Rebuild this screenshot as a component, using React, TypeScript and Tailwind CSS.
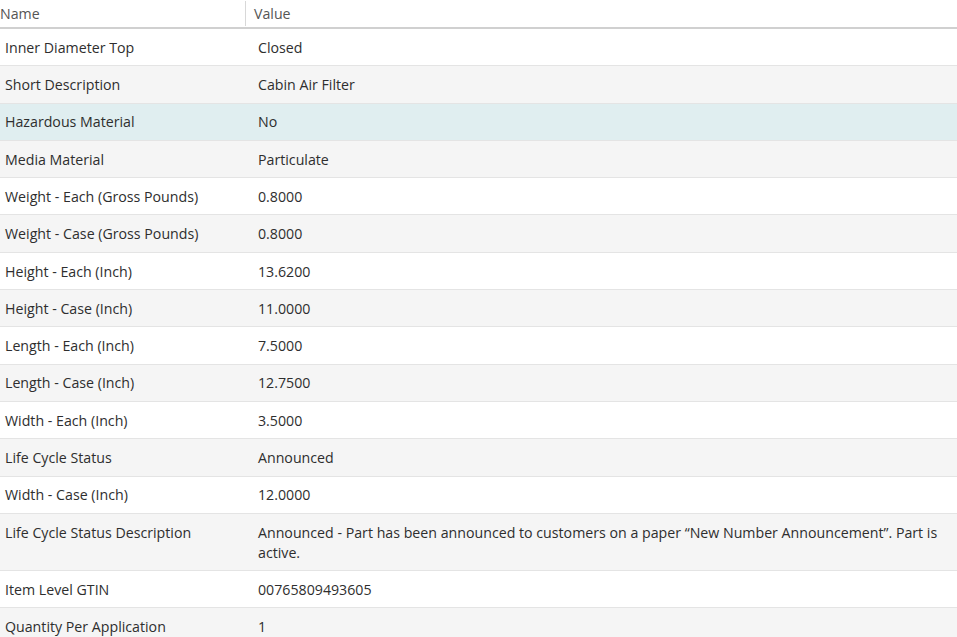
const rows: [string, string][] = [
  ["Inner Diameter Top", "Closed"],
  ["Short Description", "Cabin Air Filter"],
  ["Hazardous Material", "No"],
  ["Media Material", "Particulate"],
  ["Weight - Each (Gross Pounds)", "0.8000"],
  ["Weight - Case (Gross Pounds)", "0.8000"],
  ["Height - Each (Inch)", "13.6200"],
  ["Height - Case (Inch)", "11.0000"],
  ["Length - Each (Inch)", "7.5000"],
  ["Length - Case (Inch)", "12.7500"],
  ["Width - Each (Inch)", "3.5000"],
  ["Life Cycle Status", "Announced"],
  ["Width - Case (Inch)", "12.0000"],
  [
    "Life Cycle Status Description",
    "Announced - Part has been announced to customers on a paper \u201cNew Number Announcement\u201d. Part is active.",
  ],
  ["Item Level GTIN", "00765809493605"],
  ["Quantity Per Application", "1"],
];

export default function App() {
  return (
    <div className="w-[957px] h-[637px] overflow-hidden bg-white text-[14.2px] leading-5 text-[#2e2e2e] font-['Open_Sans','Liberation_Sans',sans-serif]">
      <div className="flex h-[29px] items-center border-b-2 border-[#d0d0d0] text-[#555]">
        <div className="w-[246px] h-[25px] flex items-center border-r border-[#d8d8d8]">Name</div>
        <div className="pl-[8px]">Value</div>
      </div>
      {rows.map(([name, value], i) => {
        const bg =
          i === 2 ? "bg-[#e0eef0]" : i % 2 === 1 ? "bg-[#f5f5f5]" : "bg-white";
        return (
          <div key={name} className={`flex border-b border-[#e4e4e4] ${bg}`}>
            <div className="w-[253px] shrink-0 pl-[5px] pt-[8.8px] pb-[7.5px]">{name}</div>
            <div className="flex-1 pl-[5px] pr-[10px] pt-[8.8px] pb-[7.5px]">{value}</div>
          </div>
        );
      })}
    </div>
  );
}
